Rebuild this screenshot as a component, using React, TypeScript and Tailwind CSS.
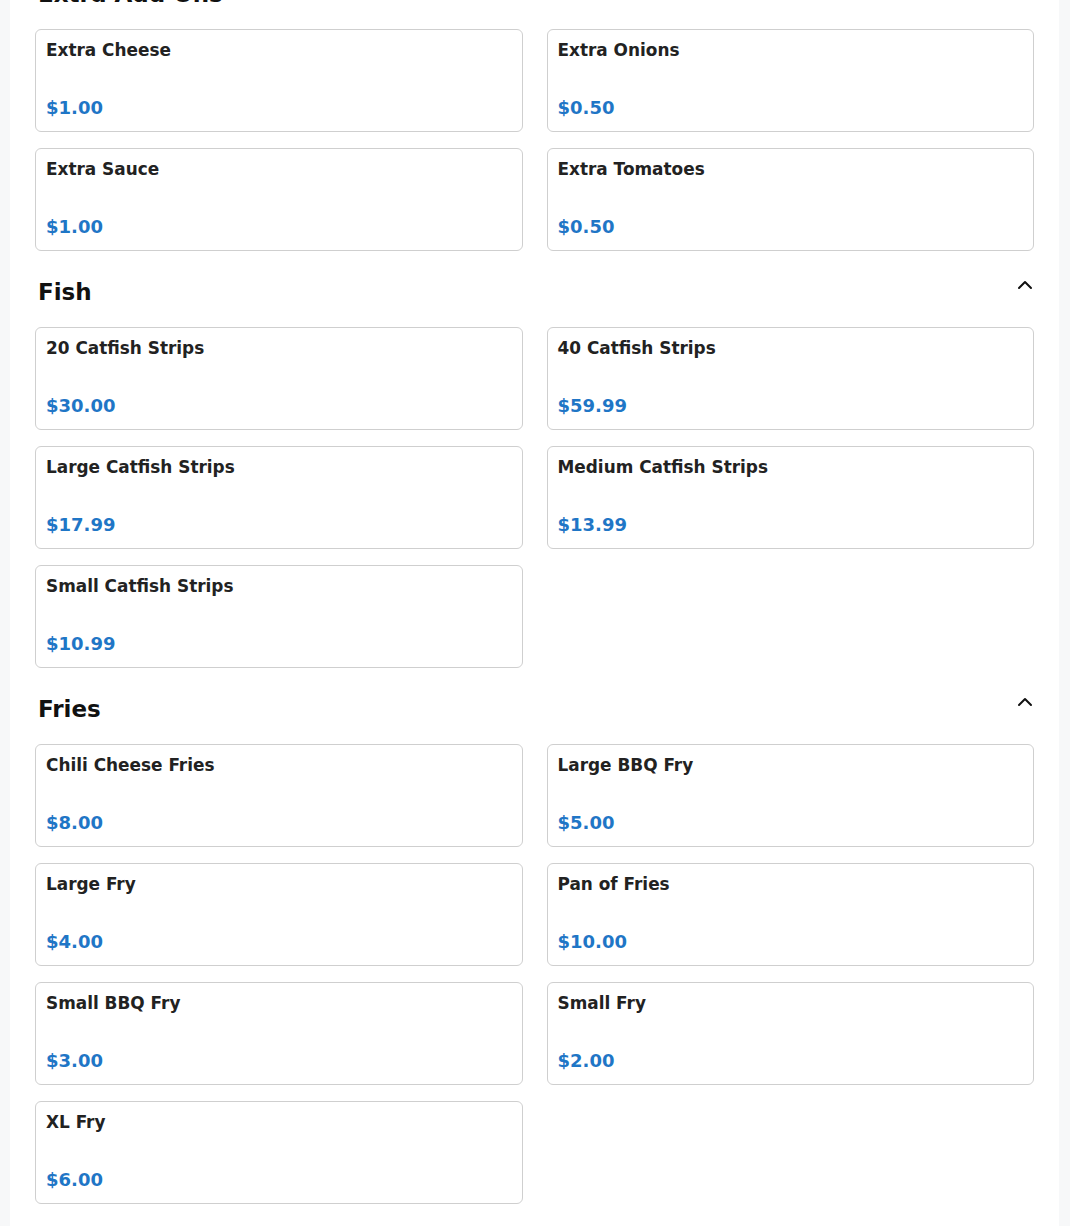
type Item = { name: string; price: string };

type Section = { title: string; items: Item[] };

const SECTIONS: Section[] = [
  {
    title: 'Extra Add Ons',
    items: [
      { name: 'Extra Cheese', price: '$1.00' },
      { name: 'Extra Onions', price: '$0.50' },
      { name: 'Extra Sauce', price: '$1.00' },
      { name: 'Extra Tomatoes', price: '$0.50' },
    ],
  },
  {
    title: 'Fish',
    items: [
      { name: '20 Catfish Strips', price: '$30.00' },
      { name: '40 Catfish Strips', price: '$59.99' },
      { name: 'Large Catfish Strips', price: '$17.99' },
      { name: 'Medium Catfish Strips', price: '$13.99' },
      { name: 'Small Catfish Strips', price: '$10.99' },
    ],
  },
  {
    title: 'Fries',
    items: [
      { name: 'Chili Cheese Fries', price: '$8.00' },
      { name: 'Large BBQ Fry', price: '$5.00' },
      { name: 'Large Fry', price: '$4.00' },
      { name: 'Pan of Fries', price: '$10.00' },
      { name: 'Small BBQ Fry', price: '$3.00' },
      { name: 'Small Fry', price: '$2.00' },
      { name: 'XL Fry', price: '$6.00' },
    ],
  },
];

function ChevronUp() {
  return (
    <svg
      width="24"
      height="24"
      viewBox="0 0 24 24"
      fill="none"
      stroke="#111"
      strokeWidth="2"
      strokeLinecap="round"
      strokeLinejoin="round"
    >
      <path d="m18 15-6-6-6 6" />
    </svg>
  );
}

function ItemCard({ item }: { item: Item }) {
  return (
    <div className="flex flex-col border border-[#cfcfcf] rounded-md bg-white px-[10px] pt-[10px] pb-[12px]">
      <div className="text-[16.9px] leading-[20px] font-bold text-[#222]">{item.name}</div>
      <div className="mt-[37px] text-[18px] leading-[22px] font-bold text-[#1f76c6]">{item.price}</div>
    </div>
  );
}

function MenuSection({ section }: { section: Section }) {
  return (
    <section>
      <div className="flex items-start justify-between mt-7 mb-[22px] pl-[3px]">
        <h2 className="text-[23px] leading-[26px] font-bold text-[#111]">{section.title}</h2>
        <div className="-mt-[6px] -mr-[3px]">
          <ChevronUp />
        </div>
      </div>
      <div className="grid grid-cols-2 gap-x-6 gap-y-4">
        {section.items.map((item) => (
          <ItemCard key={item.name} item={item} />
        ))}
      </div>
    </section>
  );
}

export default function App() {
  return (
    <div
      className="min-h-screen bg-[#f7f8f9] pl-[10px] pr-[11px] overflow-hidden"
      style={{ fontFamily: '"DejaVu Sans", Verdana, sans-serif' }}
    >
      <div className="bg-white px-[25px] pb-[22px] min-h-screen">
        <div className="-mt-[47px]">
          {SECTIONS.map((section) => (
            <MenuSection key={section.title} section={section} />
          ))}
        </div>
      </div>
    </div>
  );
}
